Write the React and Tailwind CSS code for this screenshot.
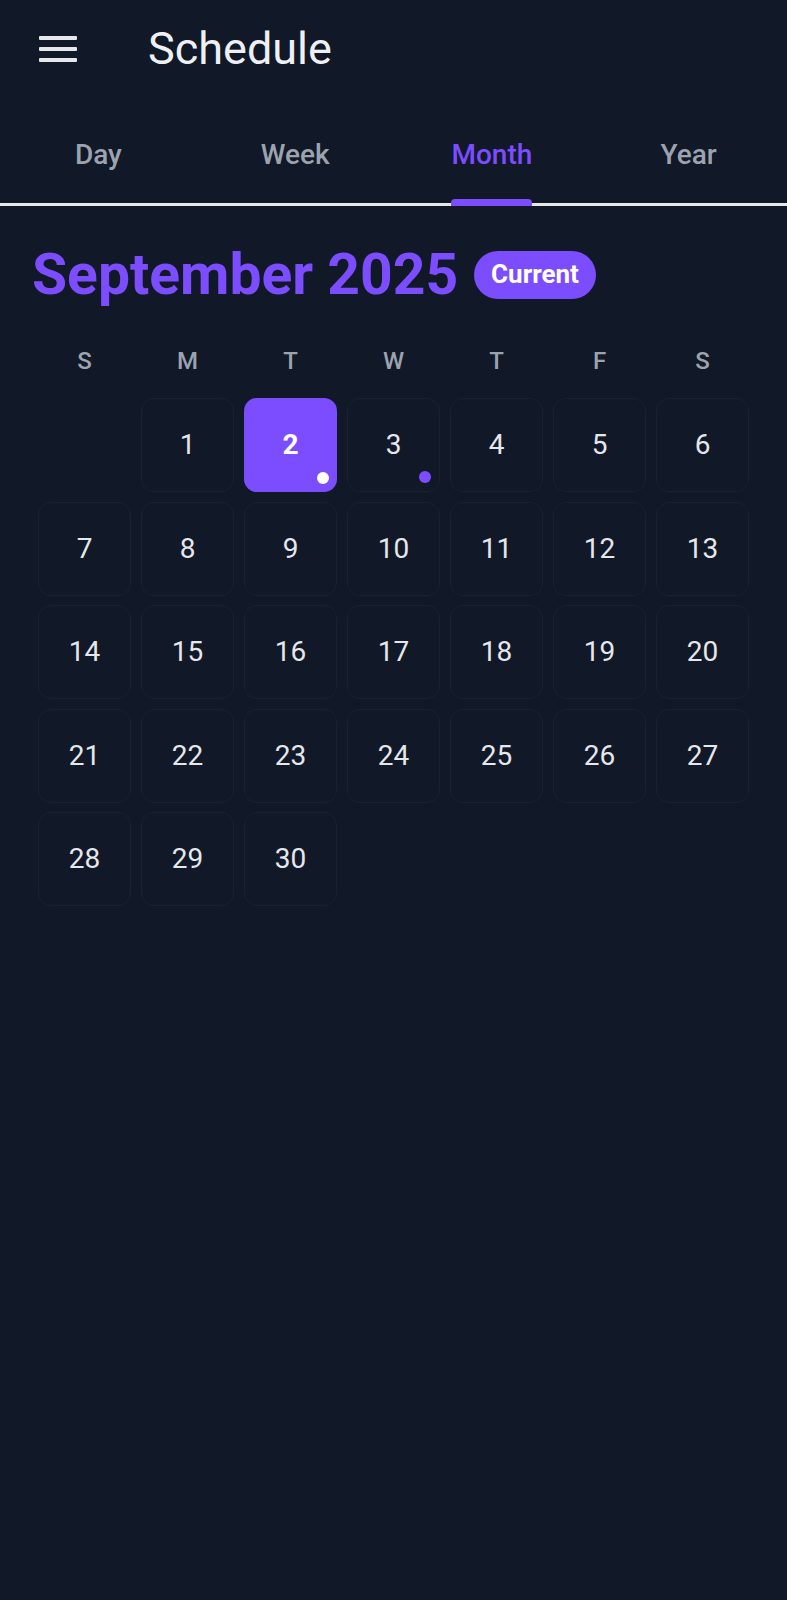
import React from "react";

const days = [null, 1, 2, 3, 4, 5, 6, 7, 8, 9, 10, 11, 12, 13, 14, 15, 16, 17, 18, 19, 20, 21, 22, 23, 24, 25, 26, 27, 28, 29, 30];
const weekdays = ["S", "M", "T", "W", "T", "F", "S"];
const tabs = ["Day", "Week", "Month", "Year"];

function Tab({ label, active }) {
  return (
    <div className="flex-1 flex justify-center">
      <div className="relative pt-[44px] pb-[34px]">
        <span
          className={
            "block text-[28px] leading-none font-medium " +
            (active ? "text-[#7c4dff]" : "text-[#9ca3af]")
          }
        >
          {label}
        </span>
        {active && (
          <div className="absolute left-0 right-0 bottom-[-3px] h-[7px] rounded-t-[4px] bg-[#7c4dff]" />
        )}
      </div>
    </div>
  );
}

function DayCell({ d }) {
  if (d === null) return <div className="h-[94px]" />;
  const selected = d === 2;
  const hasEvent = d === 3;
  return (
    <div
      className={
        "relative h-[94px] rounded-[13px] flex items-center justify-center " +
        (selected ? "bg-[#7c4dff]" : "border border-[#1a212d]")
      }
    >
      <span
        className={
          "text-[28px] leading-none " +
          (selected ? "font-bold text-white" : "font-normal text-[#e5e7eb]")
        }
      >
        {d}
      </span>
      {selected && (
        <span className="absolute right-[8px] bottom-[8px] w-[12px] h-[12px] rounded-full bg-white" />
      )}
      {hasEvent && (
        <span className="absolute right-[8px] bottom-[8px] w-[12px] h-[12px] rounded-full bg-[#7c4dff]" />
      )}
    </div>
  );
}

export default function App() {
  return (
    <div
      className="min-h-screen bg-[#111827] text-[#f3f4f6]"
      style={{ fontFamily: "Roboto, 'Noto Sans', sans-serif" }}
    >
      {/* Header */}
      <div className="h-[97px] flex items-center pl-[39px]">
        <button className="w-[38px] h-[26px] flex flex-col justify-between">
          <span className="block h-[4px] w-full bg-[#e5e7eb] rounded-[1px]" />
          <span className="block h-[4px] w-full bg-[#e5e7eb] rounded-[1px]" />
          <span className="block h-[4px] w-full bg-[#e5e7eb] rounded-[1px]" />
        </button>
        <h1 className="ml-[71px] text-[45px] leading-none font-normal text-[#eef0f5]">
          Schedule
        </h1>
      </div>

      {/* Tabs */}
      <div className="flex">
        {tabs.map((t) => (
          <Tab key={t} label={t} active={t === "Month"} />
        ))}
      </div>
      <div className="h-[3px] bg-[#e5e7eb]" />

      {/* Title */}
      <div className="flex items-center gap-[16px] pl-[32px] mt-[40px]">
        <h2 className="text-[57px] leading-none font-bold text-[#7c4dff]">
          September 2025
        </h2>
        <span className="h-[48px] px-[17px] rounded-full bg-[#7c4dff] text-white text-[26px] font-bold flex items-center">
          Current
        </span>
      </div>

      {/* Weekdays */}
      <div className="grid grid-cols-7 gap-x-[10px] px-[38px] mt-[46px]">
        {weekdays.map((w, i) => (
          <div
            key={i}
            className="text-center text-[24px] leading-none font-medium text-[#9ca3af]"
          >
            {w}
          </div>
        ))}
      </div>

      {/* Days */}
      <div className="grid grid-cols-7 gap-x-[10px] gap-y-[9.5px] px-[38px] mt-[25px]">
        {days.map((d, i) => (
          <DayCell key={i} d={d} />
        ))}
      </div>
    </div>
  );
}
